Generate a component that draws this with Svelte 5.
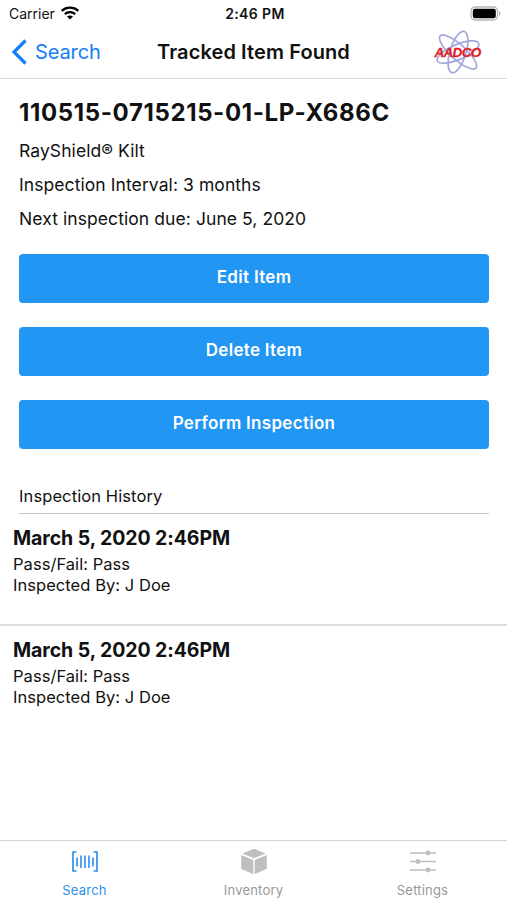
<script lang="ts">
    type Inspection = { date: string; result: string; inspector: string };

    const item = {
        serial: "110515-0715215-01-LP-X686C",
        interval: "3 months",
        due: "June 5, 2020"
    };

    const actions: string[] = ["Edit Item", "Delete Item", "Perform Inspection"];

    const history: Inspection[] = [
        { date: "March 5, 2020 2:46PM", result: "Pass", inspector: "J Doe" },
        { date: "March 5, 2020 2:46PM", result: "Pass", inspector: "J Doe" }
    ];

    const tabs: string[] = ["Search", "Inventory", "Settings"];

    let activeTab = $state("Search");
</script>

<div class="screen">
    <div class="status">
        <div class="carrier">
            <span>Carrier</span>
            <svg width="18" height="14" viewBox="0 0 18 14">
                <path d="M.7 4.800C5.400.6 12.600.6 17.300 4.800" fill="none" stroke="#000" stroke-width="2.400" />
                <path d="M3.800 8.100c3-2.600 7.400-2.600 10.400 0" fill="none" stroke="#000" stroke-width="2.200" />
                <path d="M6 10.600c1.800-1.500 4.200-1.500 6 0L9 13.600z" />
            </svg>
        </div>
        <div class="time">2:46 PM</div>
        <div class="battery">
            <svg width="31" height="15" viewBox="0 0 31 15">
                <rect x="1" y="1" width="26.500" height="13" rx="4" fill="#fff" stroke="#b5b5b5" stroke-width="1.300" />
                <rect x="2.800" y="2.800" width="23" height="9.500" rx="2.200" />
                <path d="M29 5.200c1.600.6 1.600 4 0 4.600z" fill="#a5a5a5" />
            </svg>
        </div>
    </div>

    <header>
        <button class="back">
            <svg width="16" height="26" viewBox="0 0 16 26">
                <path d="M14.500 1.500 3 13l11.500 11.500" fill="none" stroke="currentColor" stroke-width="3.200" />
            </svg>
            <span>Search</span>
        </button>
        <h1>Tracked Item Found</h1>
        <svg class="logo" width="54" height="46" viewBox="0 0 54 46">
            <g fill="none" stroke="#a3a8dc" stroke-width="1.700">
                <ellipse cx="27" cy="23" rx="8" ry="21.500" transform="rotate(17 27 23)" />
                <ellipse cx="27" cy="23" rx="7.500" ry="24" transform="rotate(-48 27 23)" />
                <ellipse cx="27" cy="23" rx="7.500" ry="22.500" transform="rotate(67 27 23)" />
            </g>
            <text x="3.500" y="28">AADCO</text>
        </svg>
    </header>

    <main>
        <section class="details">
            <h2>{item.serial}</h2>
            <p>RayShield® Kilt</p>
            <p>Inspection Interval: {item.interval}</p>
            <p>Next inspection due: {item.due}</p>

            <div class="actions">
                {#each actions as action}
                    <button class="action">{action}</button>
                {/each}
            </div>

            <h3>Inspection History</h3>
        </section>

        {#each history as inspection}
            <article>
                <h4>{inspection.date}</h4>
                <div>Pass/Fail: {inspection.result}</div>
                <div>Inspected By: {inspection.inspector}</div>
            </article>
        {/each}
    </main>

    <nav>
        {#each tabs as tab}
            <button class="tab" class:active={tab === activeTab} onclick={() => (activeTab = tab)}>
                <svg width="30" height="28" viewBox="0 0 30 28">
                    {#if tab === "Search"}
                        <g fill="none" stroke="currentColor">
                            <path d="M6.500 4H3v19h3.500M23.500 4H27v19h-3.500" stroke-width="1.700" />
                            <path d="M7 9.500v9M11 7.500v12.500M15 7.500v12.500M19 7.500v12.500M23 9.500v9" stroke-width="1.600" />
                        </g>
                    {:else if tab === "Inventory"}
                        <path d="M15 .8 26.500 5.600 15 10.300 3.500 5.600zM2.200 7.100 14.300 12V26.200L2.200 20.800zM27.800 7.100 15.700 12V26.200L27.800 20.800z" fill="currentColor" />
                    {:else}
                        <path d="M2 5h26M2 13.500h26M2 22h26" stroke="currentColor" stroke-width="1.500" />
                        <g fill="currentColor">
                            <circle cx="20" cy="5" r="2.400" />
                            <circle cx="10" cy="13.500" r="2.400" />
                            <circle cx="20" cy="22" r="2.400" />
                        </g>
                    {/if}
                </svg>
                <span>{tab}</span>
            </button>
        {/each}
    </nav>
</div>

<style>
    :global(body) {
        margin: 0;
        background: #fff;
    }

    .screen {
        display: flex;
        flex-direction: column;
        height: 900px;
        overflow: hidden;
        font-family: Inter, "Liberation Sans", sans-serif;
        color: #111;
        background: #fff;
    }

    h1, h2, h3, h4, p {
        margin: 0;
    }

    button {
        font-family: inherit;
        border: none;
        padding: 0;
        background: none;
        cursor: pointer;
    }

    svg {
        display: block;
        flex: none;
    }

    .status {
        display: grid;
        grid-template-columns: 1fr auto 1fr;
        align-items: center;
        height: 27px;
        padding: 0 6px 0 9px;
        font-size: 14px;
    }

    .carrier {
        display: flex;
        align-items: center;
        gap: 6px;
    }

    .carrier svg {
        margin-bottom: 1px;
    }

    .time {
        font-weight: 600;
        letter-spacing: 0.4px;
    }

    .battery {
        justify-self: end;
        margin-bottom: 1px;
    }

    header {
        display: grid;
        grid-template-columns: 1fr auto 1fr;
        align-items: center;
        height: 51px;
        padding: 0 22px;
        border-bottom: 1px solid #d9d9d9;
    }

    .back {
        display: flex;
        align-items: center;
        gap: 8px;
        margin: -2px 0 0 -11px;
        font-size: 20px;
        letter-spacing: -0.1px;
        color: #147efb;
    }

    h1 {
        font-size: 20px;
        font-weight: 600;
        line-height: 24px;
        letter-spacing: 0.1px;
        margin-top: -2px;
    }

    .logo {
        justify-self: end;
        margin-top: -1px;
    }

    .logo text {
        font: italic bold 13.500px "Liberation Sans", sans-serif;
        letter-spacing: -0.7px;
        fill: #df2029;
        stroke: #df2029;
        stroke-width: 0.3;
    }

    main {
        flex: 1;
    }

    .details {
        padding: 19px 18px 0 19px;
    }

    h2 {
        font-size: 24px;
        font-weight: 700;
        line-height: 30px;
        letter-spacing: 0.63px;
        margin-bottom: 6px;
        white-space: nowrap;
    }

    p {
        font-size: 17.500px;
        line-height: 34.200px;
        letter-spacing: 0.08px;
    }

    .actions {
        display: flex;
        flex-direction: column;
        gap: 24.400px;
        margin-top: 17px;
    }

    .action {
        height: 49px;
        padding-bottom: 3px;
        border-radius: 4px;
        background: #2196f3;
        color: #fff;
        font-size: 17px;
        font-weight: 600;
        letter-spacing: 0.3px;
    }

    h3 {
        padding-top: 35px;
        height: 29px;
        border-bottom: 1px solid #c8c8c8;
        font-size: 16.500px;
        font-weight: 400;
        line-height: 24px;
        letter-spacing: 0.1px;
    }

    article {
        box-sizing: border-box;
        height: 111.500px;
        padding: 11px 13px 0;
        border-bottom: 2px solid #dcdcdc;
    }

    article:last-child {
        border-bottom: none;
    }

    h4 {
        font-size: 19.500px;
        font-weight: 700;
        line-height: 26px;
        letter-spacing: -0.08px;
        margin-bottom: 3px;
    }

    article div {
        font-size: 16.500px;
        line-height: 21px;
        letter-spacing: 0.05px;
    }

    nav {
        box-sizing: border-box;
        display: grid;
        grid-template-columns: repeat(3, 1fr);
        height: 60px;
        border-top: 1px solid #d4d4d4;
    }

    .tab {
        display: flex;
        flex-direction: column;
        align-items: center;
        padding-top: 7px;
        gap: 6px;
        color: #999;
        font-size: 13px;
        line-height: 16px;
        letter-spacing: 0.2px;
    }

    .tab svg {
        color: #bfbfbf;
    }

    .tab.active,
    .tab.active svg {
        color: #2e90ec;
    }
</style>
